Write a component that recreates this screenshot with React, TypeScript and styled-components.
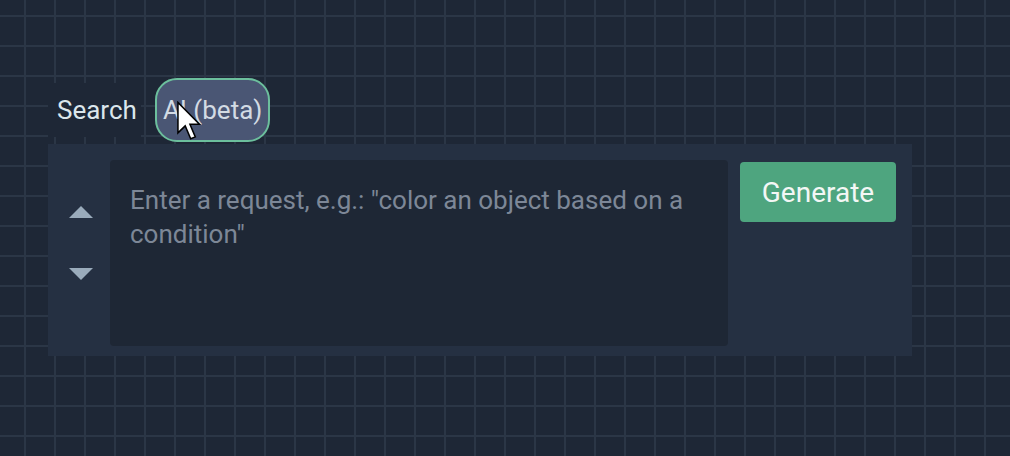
import styled, { createGlobalStyle } from 'styled-components';

const GlobalStyle = createGlobalStyle`
  html, body {
    margin: 0;
    padding: 0;
  }
  body {
    width: 1010px;
    height: 456px;
    overflow: hidden;
    font-family: Roboto, "Liberation Sans", sans-serif;
    background-color: #1e2736;
    background-image:
      linear-gradient(to right, #2b3646 2px, transparent 2px),
      linear-gradient(to bottom, #2b3646 2px, transparent 2px);
    background-size: 30px 30px;
    background-position: 24px 15px;
  }
`

const Page = styled.div`
  position: relative;
  padding: 78px 0 0 48px;
  width: 864px;
`

const TabRow = styled.div`
  display: flex;
  align-items: center;
  gap: 14px;
  height: 64px;
  margin-bottom: 2px;
`

const Tab = styled.button<{ active?: boolean }>`
  font-family: Roboto, "Liberation Sans", sans-serif;
  font-size: 26px;
  box-sizing: border-box;
  height: ${props => props.active ? '64px' : '54px'};
  padding: ${props => props.active ? '0 6px' : '0 4px 0 9px'};
  border: ${props => props.active ? '2px solid #6cbf9d' : 'none'};
  border-radius: ${props => props.active ? '22px' : '0'};
  background: ${props => props.active ? '#4a5674' : '#1e2736'};
  color: ${props => props.active ? '#d3dbe4' : '#dbe6ec'};
  cursor: pointer;
`

const Panel = styled.div`
  display: flex;
  align-items: flex-start;
  background: #253042;
  padding: 16px 16px 10px 0;
  height: 212px;
  box-sizing: border-box;
`

const ArrowColumn = styled.div`
  width: 62px;
  box-sizing: border-box;
  padding: 46px 0 0 4px;
  display: flex;
  flex-direction: column;
  align-items: center;
  gap: 50px;
`

const Arrow = styled.div<{ down?: boolean }>`
  width: 0;
  height: 0;
  border-left: 12px solid transparent;
  border-right: 12px solid transparent;
  ${props => props.down ? 'border-top: 12px solid #9aabbb;' : 'border-bottom: 12px solid #9aabbb;'}
`

const Prompt = styled.textarea`
  flex: none;
  width: 618px;
  height: 186px;
  box-sizing: border-box;
  resize: none;
  border: none;
  outline: none;
  border-radius: 4px;
  background: #1e2735;
  padding: 23px 20px;
  font-family: Roboto, "Liberation Sans", sans-serif;
  font-size: 26px;
  line-height: 34px;
  color: #d3dbe4;

  &::placeholder {
    color: #7d8797;
  }
`

const GenerateButton = styled.button`
  margin: 2px 0 0 12px;
  width: 156px;
  height: 60px;
  border: none;
  border-radius: 4px;
  background: #4ea57f;
  color: #f3f7f5;
  font-family: Roboto, "Liberation Sans", sans-serif;
  font-size: 28px;
  cursor: pointer;
`

const Pointer = styled.svg`
  position: absolute;
  left: 177px;
  top: 101px;
  pointer-events: none;
`

const App = () => {
  return (
    <>
      <GlobalStyle />
      <Page>
        <TabRow>
          <Tab>Search</Tab>
          <Tab active>AI (beta)</Tab>
        </TabRow>
        <Panel>
          <ArrowColumn>
            <Arrow />
            <Arrow down />
          </ArrowColumn>
          <Prompt placeholder={'Enter a request, e.g.: "color an object based on a condition"'} />
          <GenerateButton>Generate</GenerateButton>
        </Panel>
        <Pointer width="24" height="40" viewBox="0 0 12.6 20.5">
          <path
            d="M0.5 0.5 L0.5 16.5 L4.3 12.8 L7.2 19.6 L9.6 18.6 L6.8 12 L11.8 12 Z"
            fill="#fff"
            stroke="#000"
            strokeWidth="0.8"
            strokeLinejoin="miter"
          />
        </Pointer>
      </Page>
    </>
  )
}

export default App;
